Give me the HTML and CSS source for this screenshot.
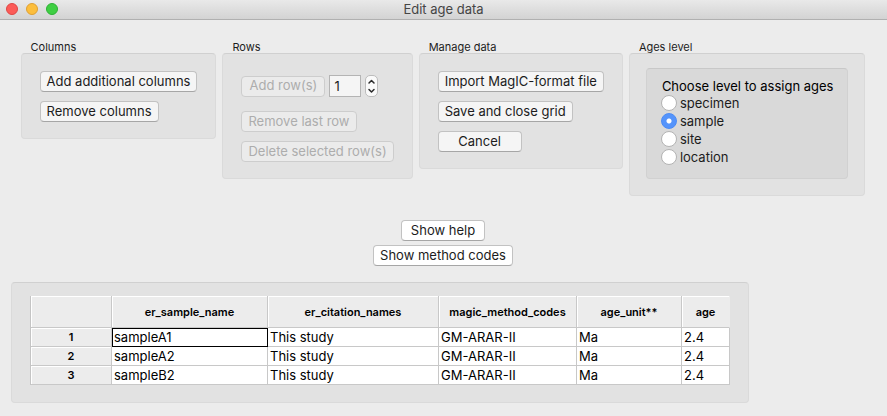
FILE: index.html
```html
<!DOCTYPE html>
<html lang="en">
<head>
<meta charset="utf-8">
<title>Edit age data</title>
<link rel="stylesheet" href="styles.css">
</head>
<body>
<header class="titlebar">
  <div class="lights">
    <button class="light close" aria-label="Close"></button>
    <button class="light minimize" aria-label="Minimize"></button>
    <button class="light zoom" aria-label="Zoom"></button>
  </div>
  <h1>Edit age data</h1>
</header>
<main>
  <div class="groups">
    <section class="group">
      <h2>Columns</h2>
      <div class="box">
        <button class="btn">Add additional columns</button>
        <button class="btn">Remove columns</button>
      </div>
    </section>
    <section class="group">
      <h2>Rows</h2>
      <div class="box rows-box">
        <div class="add-rows">
          <button class="btn" disabled>Add row(s)</button>
          <input class="count" type="text" value="1" aria-label="Number of rows">
          <button class="stepper" aria-label="Change number of rows">
            <svg width="11" height="20" viewBox="0 0 11 20" fill="none" stroke="#2b2b2b" stroke-width="1.5" stroke-linecap="round" stroke-linejoin="round"><path d="M3 7 5.500 4.500 8 7M3 13.500 5.500 16 8 13.500"/></svg>
          </button>
        </div>
        <button class="btn" disabled>Remove last row</button>
        <button class="btn" disabled>Delete selected row(s)</button>
      </div>
    </section>
    <section class="group">
      <h2>Manage data</h2>
      <div class="box">
        <button class="btn">Import MagIC-format file</button>
        <button class="btn">Save and close grid</button>
        <button class="btn">Cancel</button>
      </div>
    </section>
    <section class="group">
      <h2>Ages level</h2>
      <div class="box ages-box">
        <div class="levels" role="radiogroup" aria-labelledby="level-title">
          <p id="level-title">Choose level to assign ages</p>
          <label><input type="radio" name="level">specimen</label>
          <label><input type="radio" name="level" checked>sample</label>
          <label><input type="radio" name="level">site</label>
          <label><input type="radio" name="level">location</label>
        </div>
      </div>
    </section>
  </div>
  <div class="help">
    <button class="btn bright">Show help</button>
    <button class="btn bright">Show method codes</button>
  </div>
  <div class="grid-box">
    <table>
      <colgroup><col class="c-index"><col class="c-sample"><col class="c-citation"><col class="c-codes"><col class="c-unit"><col class="c-age"></colgroup>
      <thead>
        <tr><th></th><th>er_sample_name</th><th>er_citation_names</th><th>magic_method_codes</th><th>age_unit**</th><th>age</th></tr>
      </thead>
      <tbody>
        <tr><th>1</th><td class="current">sampleA1</td><td>This study</td><td>GM-ARAR-II</td><td>Ma</td><td>2.4</td></tr>
        <tr><th>2</th><td>sampleA2</td><td>This study</td><td>GM-ARAR-II</td><td>Ma</td><td>2.4</td></tr>
        <tr><th>3</th><td>sampleB2</td><td>This study</td><td>GM-ARAR-II</td><td>Ma</td><td>2.4</td></tr>
      </tbody>
    </table>
  </div>
</main>
</body>
</html>
```
FILE: styles.css
```css
* { box-sizing: border-box; }
body {
  margin: 0;
  background: #ececec;
  color: #1c1c1c;
  font: 13px/16px Inter, "Liberation Sans", sans-serif;
}
button, input { font: inherit; color: inherit; margin: 0; }
h1, h2, p { margin: 0; font-weight: 400; }

.titlebar {
  display: grid;
  grid-template-columns: 1fr auto 1fr;
  align-items: start;
  height: 20px;
  padding: 0 6px;
  background: linear-gradient(#e9e9e9, #d3d3d3);
  border-bottom: 1px solid #b0b0b0;
}
.titlebar h1 { font-size: 13px; line-height: 19px; color: #454545; }
.lights { display: flex; gap: 8px; padding-top: 3px; }
.light { width: 12px; height: 12px; padding: 0; border: 1px solid; border-radius: 50%; }
.close { background: #fc5b57; border-color: #df4744; }
.minimize { background: #fcbe3c; border-color: #dfa033; }
.zoom { background: #3fcf43; border-color: #2eb135; }

main { padding: 21px 0 13px; }
.groups {
  display: flex;
  justify-content: center;
  align-items: flex-start;
  gap: 6px;
  padding-right: 1px;
}
.group h2 { padding-left: 10px; font-size: 11px; line-height: 12px; }
.box, .grid-box {
  background: #e2e2e2;
  border: 1px solid #dadada;
  border-top-color: #d0d0d0;
  border-radius: 4px;
}
.box {
  display: flex;
  flex-direction: column;
  align-items: flex-start;
  gap: 9px;
  padding: 17px 18px 16px;
}
.btn {
  height: 21px;
  min-width: 84px;
  padding: 0 6px 2px;
  line-height: 16px;
  white-space: nowrap;
  background: #f5f5f5;
  border: 1px solid #c2c2c2;
  border-bottom-color: #a6a6a6;
  border-radius: 4px;
}
.btn.bright { background: #fff; }
.btn:disabled { background: #ebebeb; border-color: #cdcdcd; color: #adadad; }
.rows-box { padding-top: 21px; }
.add-rows { display: flex; align-items: center; gap: 4px; margin-bottom: 5px; }
.count {
  width: 32px;
  height: 22px;
  padding: 0 4px;
  background: #f5f5f5;
  border: 1px solid #b4b4b4;
}
.stepper {
  display: block;
  width: 13px;
  height: 22px;
  padding: 0;
  background: #fafafa;
  border: 1px solid #bcbcbc;
  border-radius: 5px;
}
.stepper svg { display: block; }
.ages-box { padding: 14px 16px 16px; }
.levels {
  display: flex;
  flex-direction: column;
  padding: 9px 14px 12px;
  background: #d9d9d9;
  border: 1px solid #d1d1d1;
  border-top-color: #c8c8c8;
  border-radius: 4px;
}
.levels p { padding-left: 1px; line-height: 16px; color: #000; }
.levels label { display: flex; align-items: center; gap: 3px; height: 18px; }
.levels input {
  appearance: none;
  width: 16px;
  height: 16px;
  background: #fff;
  border: 1px solid #b3b3b3;
  border-radius: 50%;
}
.levels input:checked {
  border-color: #4b8bf5;
  background: radial-gradient(circle, #fff 0 2px, #5594fb 3px);
}

.help {
  display: flex;
  flex-direction: column;
  align-items: center;
  gap: 4px;
  margin-top: 24px;
  padding-right: 1px;
}
.grid-box { width: fit-content; margin: 16px 0 0 11px; padding: 13px 18px 17px; }
table { table-layout: fixed; width: 700px; border-collapse: separate; border-spacing: 0; border-left: 1px solid #c4c4c4; }
.c-index { width: 81px; }
.c-sample { width: 156px; }
.c-citation { width: 171px; }
.c-codes { width: 138px; }
.c-unit { width: 105px; }
.c-age { width: 48px; }
th, td {
  height: 19px;
  padding: 1px 2px 0;
  line-height: 17px;
  color: #000;
  border: 0 solid #c8c8c8;
  border-width: 0 1px 1px 0;
}
th {
  font-size: 11px;
  font-weight: 600;
  text-align: center;
  background: #ececec;
  box-shadow: inset 1px 1px #fff;
}
thead th { height: 32px; }
thead th:last-child { border-right-color: #ececec; }
td { text-align: left; background: #fff; }
.current { outline: 1px solid #000; outline-offset: -1px; }
```
